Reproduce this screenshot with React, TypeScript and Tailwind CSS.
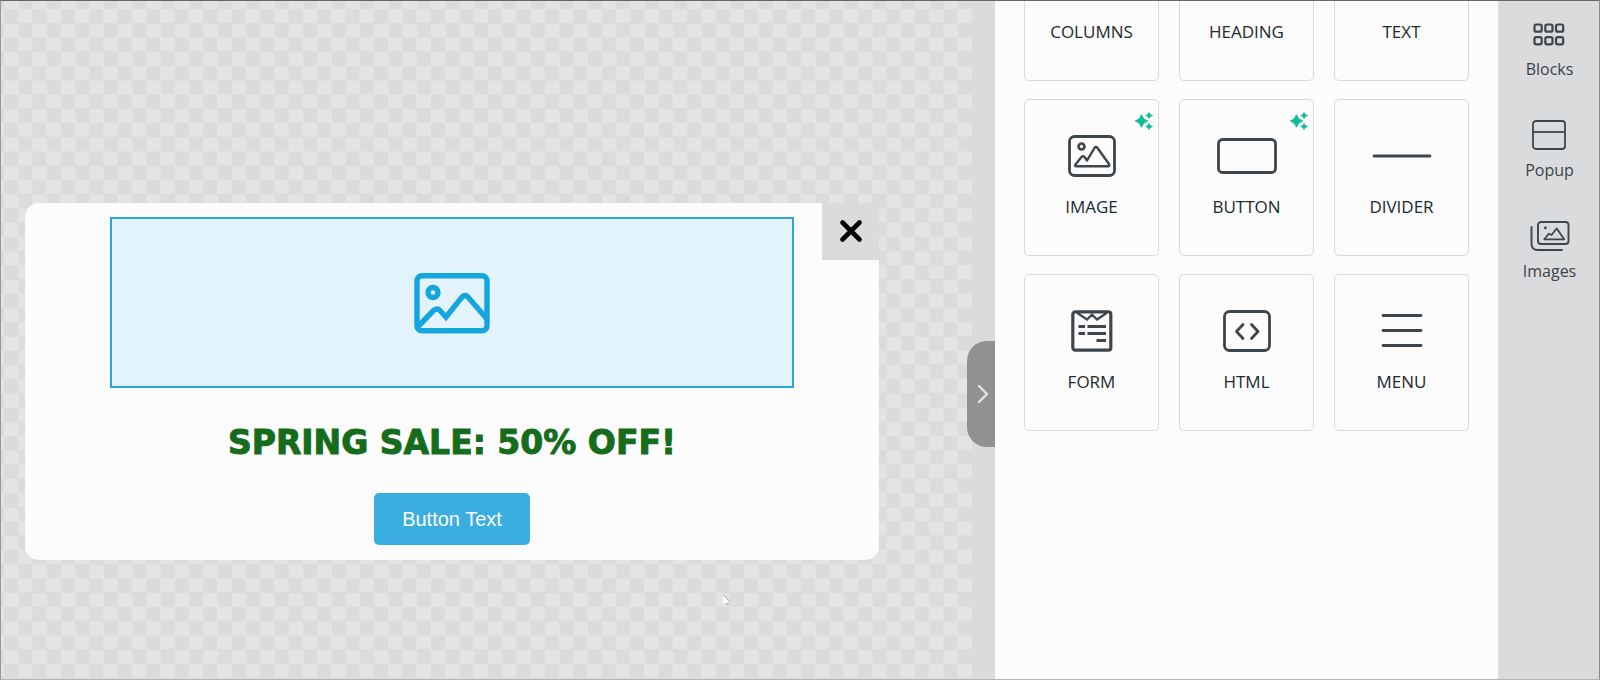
import type { ReactNode } from "react";

const ink = "#3e464c";

function Svg({ w, h, children }: { w: number; h: number; children: ReactNode }) {
  return (
    <svg
      width={w}
      height={h}
      viewBox={`0 0 ${w} ${h}`}
      fill="none"
      stroke={ink}
      strokeWidth={2.8}
      strokeLinecap="round"
      strokeLinejoin="round"
      aria-hidden="true"
    >
      {children}
    </svg>
  );
}

const ColumnsIcon = () => (
  <Svg w={52} h={42}>
    <rect x="1.5" y="1.5" width="49" height="38" rx="4" />
    <path d="M26 2v37" />
  </Svg>
);

const HeadingIcon = () => (
  <Svg w={42} h={42}>
    <path d="M7 2v37M35 2v37M7 21h28M1.500 39.500h12M28.500 39.500h12M1.500 1.500h12M28.500 1.500h12" />
  </Svg>
);

const TextIcon = () => (
  <Svg w={42} h={42}>
    <path d="M2 8V2h24v6M14 2v37M9 39.500h10M30 39.500h9M34 24v15" />
  </Svg>
);

const ImageIcon = () => (
  <Svg w={48} h={42}>
    <rect x="1.500" y="1.500" width="45" height="39" rx="5" />
    <circle cx="13.500" cy="11.500" r="3" strokeWidth={2.600} />
    <path d="M7.500 29.500 13.500 22q1.500-1.500 3 0L19 25.500l7.500-12.500q1.500-2 3 0L41 29q1 2.300-1 2.300H8.500q-2.300 0-1-1.800Z" strokeWidth={2.400} />
  </Svg>
);

const ButtonIcon = () => (
  <Svg w={60} h={36}>
    <rect x="1.500" y="1.500" width="57" height="33" rx="4" />
  </Svg>
);

const DividerIcon = () => (
  <Svg w={60} h={4}>
    <path d="M2 2h56" />
  </Svg>
);

const FormIcon = () => (
  <Svg w={42} h={42}>
    <rect x="1.800" y="1.800" width="38" height="38.400" rx="2.500" strokeWidth={3.200} />
    <path d="M7 3.500 16 9.500l5-5 5 5 9-6" strokeWidth={2.200} strokeLinejoin="miter" />
    <path d="M7.500 16.500h6.500M16.500 16.500h18.500M7.500 23.500h6.500M16.500 23.500h18.500M25.500 30.500h9.500" strokeWidth={3.200} strokeLinecap="butt" />
  </Svg>
);

const HtmlIcon = () => (
  <Svg w={48} h={42}>
    <rect x="1.500" y="1.500" width="45" height="39" rx="5" />
    <path d="m20 14.500-6.500 7 6.500 7M28.500 14.500l6.500 7-6.500 7" />
  </Svg>
);

const MenuIcon = () => (
  <Svg w={42} h={34}>
    <path d="M2 1.500h38M2 16.500h38M2 31.500h38" />
  </Svg>
);

const Sparkles = () => (
  <svg width="18" height="18" viewBox="0 0 18 18" fill="#0fba97" aria-hidden="true">
    <path d="M6.500 2.800Q8 7.800 12.800 9 8 10.200 6.500 15.200 5 10.200 .2 9 5 7.800 6.500 2.800Z" stroke="#0fba97" strokeWidth="0.900" />
    <path d="M14 .5Q14.600 3 17.500 3.500 14.600 4 14 6.500 13.400 4 10.800 3.500 13.400 3 14 .5ZM14 11.500Q14.600 14 17.500 14.500 14.600 15 14 17.500 13.400 15 10.800 14.500 13.400 14 14 11.500Z" stroke="#0fba97" strokeWidth="0.900" />
  </svg>
);

type Block = { label: string; icon: ReactNode; ai?: boolean };

const blocks: Block[] = [
  { label: "COLUMNS", icon: <ColumnsIcon /> },
  { label: "HEADING", icon: <HeadingIcon /> },
  { label: "TEXT", icon: <TextIcon /> },
  { label: "IMAGE", icon: <ImageIcon />, ai: true },
  { label: "BUTTON", icon: <ButtonIcon />, ai: true },
  { label: "DIVIDER", icon: <DividerIcon /> },
  { label: "FORM", icon: <FormIcon /> },
  { label: "HTML", icon: <HtmlIcon /> },
  { label: "MENU", icon: <MenuIcon /> },
];

const BlocksTabIcon = () => (
  <svg width="32" height="30" viewBox="0 0 32 30" fill="none" stroke={ink} strokeWidth={2.200} aria-hidden="true">
    {[1.500, 12.300, 23].map((x) => (
      <g key={x}>
        <rect x={x} y="5.500" width="7.200" height="7.200" rx="1.800" />
        <rect x={x} y="18.200" width="7.200" height="7.200" rx="1.800" />
      </g>
    ))}
  </svg>
);

const PopupTabIcon = () => (
  <svg width="34" height="30" viewBox="0 0 34 30" fill="none" stroke={ink} strokeWidth={1.800} aria-hidden="true">
    <rect x="1" y="1" width="32" height="28" rx="3" />
    <path d="M1 12h32" />
  </svg>
);

const ImagesTabIcon = () => (
  <svg width="40" height="30" viewBox="0 0 40 30" fill="none" stroke={ink} strokeWidth={1.900} strokeLinecap="round" strokeLinejoin="round" aria-hidden="true">
    <rect x="8" y="1" width="30.500" height="22" rx="3" />
    <path d="M1.500 6v16.500q0 6.500 6.500 6.500h24" />
    <circle cx="15.300" cy="6.800" r="1" fill={ink} strokeWidth={1} />
    <path d="m14.300 18.300 4.500-5.600 2.700 1.300L26.700 7.500l7.500 10.800Z" strokeWidth={1.800} />
  </svg>
);

const tabs = [
  { label: "Blocks", icon: <BlocksTabIcon /> },
  { label: "Popup", icon: <PopupTabIcon /> },
  { label: "Images", icon: <ImagesTabIcon /> },
];

export default function App() {
  return (
    <main className="flex h-screen overflow-hidden border border-t-[#68666a] border-r-[#8b8b8e] border-b-[#b5b5b6] border-l-[#98969a] bg-[#dadbdd] font-['Open_Sans',sans-serif] text-[#22292f]">
      <section aria-label="Canvas" className="relative flex min-w-0 flex-1 pr-[23px]">
        <div className="flex-1 bg-[repeating-conic-gradient(#e4e4e4_0_25%,#dadbdd_0_50%)] bg-[length:2.933%_4.2%] bg-[position:3px_8px] pt-[202px] pr-[93px] pl-6">
          <article className="relative flex flex-col items-center rounded-[14px] bg-[#fcfcfc] pt-[14px] pb-[15px]">
            <div className="flex h-[171px] w-4/5 items-center justify-center border-2 border-[#2aa5de] bg-[#e2f3fb]">
              <svg width="76" height="62" viewBox="0 0 76 62" fill="none" stroke="#14a4de" strokeWidth="5.400" strokeLinejoin="round" aria-label="Image placeholder" role="img">
                <rect x="3" y="3.800" width="70" height="55" rx="5" />
                <circle cx="19" cy="20.500" r="5" />
                <path d="M4.500 54 19.500 38.500q3.500-3 6.500 0l6 6.500L48 25q3-2.800 6 0L73 47" strokeLinejoin="miter" />
              </svg>
            </div>
            <h1 className="mt-[31px] text-center font-['DejaVu_Sans',sans-serif] text-[33px] leading-[48px] font-bold text-[#156c1b] [-webkit-text-stroke:1px_#156c1b]">SPRING SALE: 50% OFF!</h1>
            <button type="button" className="mt-[26px] h-[52px] rounded-[5px] bg-[#3aade1] px-7 font-['Liberation_Sans',Arial,sans-serif] text-xl text-white">
              Button Text
            </button>
            <button type="button" aria-label="Close popup" className="absolute top-0 right-0 flex h-[57px] w-[57px] items-center justify-center bg-[#dadbdd] pb-px">
              <svg width="24" height="24" viewBox="0 0 24 24" stroke="#000" strokeWidth="4.600" strokeLinecap="round" aria-hidden="true">
                <path d="m3.500 3.500 17 17M20.500 3.500l-17 17" />
              </svg>
            </button>
          </article>
        </div>
        <button type="button" aria-label="Collapse panel" className="absolute top-[340px] right-0 flex h-[106px] w-7 items-center justify-center rounded-l-[20px] bg-[#8f9193] pl-1">
          <svg width="12" height="20" viewBox="0 0 12 20" fill="none" stroke="#e3e4e5" strokeWidth="2.400" strokeLinecap="round" strokeLinejoin="round" aria-hidden="true">
            <path d="m2 2 8 8-8 8" />
          </svg>
        </button>
        <svg className="absolute top-[593px] left-[721px]" width="10" height="14" viewBox="0 0 10 14" aria-hidden="true">
          <path d="M1 .8 8.200 8H5.500L4.500 9.500 3 8.500.8 10Z" fill="#fcfcfc" />
          <path d="M1.500 1 8.200 8" stroke="#a7a5a3" strokeWidth="1" />
          <path d="M4 9h3v2.500H4Z" fill="#bfc2c4" />
        </svg>
      </section>

      <section aria-label="Content blocks" className="shrink-0 overflow-hidden bg-[#fcfcfc] px-[29px]">
        <div className="-mt-[77px] grid grid-cols-[repeat(3,135px)] gap-x-5 gap-y-[18px]">
          {blocks.map((b) => (
            <button key={b.label} type="button" className="relative flex h-[157px] flex-col items-center rounded-[5px] border border-[#d5dadc] pt-[28px]">
              <span className="flex h-14 items-center">{b.icon}</span>
              <span className="mt-[11px] text-[17px] leading-6">{b.label}</span>
              {b.ai && (
                <span className="absolute top-3 right-[5px]">
                  <Sparkles />
                </span>
              )}
            </button>
          ))}
        </div>
      </section>

      <nav aria-label="Editor tabs" className="flex w-[101px] shrink-0 flex-col items-center gap-[39px] pt-[18px] pl-0.5">
        {tabs.map((t) => (
          <button key={t.label} type="button" className="flex flex-col items-center gap-2 text-[16px] leading-6 text-[#3b434a]">
            {t.icon}
            {t.label}
          </button>
        ))}
      </nav>
    </main>
  );
}
